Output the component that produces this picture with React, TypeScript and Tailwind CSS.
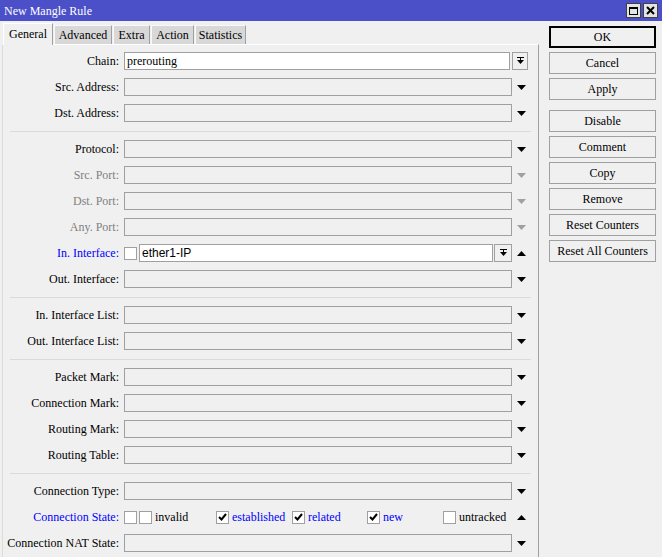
import React from 'react';

type Field = {
  kind: 'field';
  label: string;
  tone?: 'normal' | 'dim' | 'blue';
  value?: string;
  arrow?: 'down' | 'up' | 'none';
  chain?: boolean;
  iface?: boolean;
  state?: boolean;
};
type Sep = { kind: 'sep' };
type Item = Field | Sep;

const rows: Item[] = [
  { kind: 'field', label: 'Chain:', value: 'prerouting', chain: true },
  { kind: 'field', label: 'Src. Address:' },
  { kind: 'field', label: 'Dst. Address:' },
  { kind: 'sep' },
  { kind: 'field', label: 'Protocol:' },
  { kind: 'field', label: 'Src. Port:', tone: 'dim' },
  { kind: 'field', label: 'Dst. Port:', tone: 'dim' },
  { kind: 'field', label: 'Any. Port:', tone: 'dim' },
  { kind: 'field', label: 'In. Interface:', tone: 'blue', iface: true },
  { kind: 'field', label: 'Out. Interface:' },
  { kind: 'sep' },
  { kind: 'field', label: 'In. Interface List:' },
  { kind: 'field', label: 'Out. Interface List:' },
  { kind: 'sep' },
  { kind: 'field', label: 'Packet Mark:' },
  { kind: 'field', label: 'Connection Mark:' },
  { kind: 'field', label: 'Routing Mark:' },
  { kind: 'field', label: 'Routing Table:' },
  { kind: 'sep' },
  { kind: 'field', label: 'Connection Type:' },
  { kind: 'field', label: 'Connection State:', tone: 'blue', state: true },
  { kind: 'field', label: 'Connection NAT State:' },
];

const tabs = ['General', 'Advanced', 'Extra', 'Action', 'Statistics'];
const tabWidths = ['w-[50px]', 'w-[58px]', 'w-[37px]', 'w-[43px]', 'w-[51px]'];

const Tri = ({ up, dim }: { up?: boolean; dim?: boolean }) => (
  <svg width="9" height="5" viewBox="0 0 9 5" className="block">
    <polygon points={up ? '0,5 9,5 4.5,0' : '0,0 9,0 4.5,5'} fill={dim ? '#a0a0a0' : '#000'} />
  </svg>
);

const DropBtn = ({ w }: { w: string }) => (
  <div className={`${w} h-[18px] border border-[#a0a0a0] bg-[#f0f0f0] flex items-center justify-center`}>
    <svg width="7" height="8" viewBox="0 0 7 8">
      <rect x="0" y="0" width="7" height="1" fill="#000" />
      <rect x="3" y="1" width="1" height="2" fill="#000" />
      <polygon points="0,3 7,3 3.5,7" fill="#000" />
    </svg>
  </div>
);

const Check = ({ on }: { on?: boolean }) => (
  <div className="w-[13px] h-[13px] border border-[#a0a0a0] bg-white flex items-center justify-center shrink-0">
    {on && (
      <svg width="9" height="8" viewBox="0 0 9 8">
        <path d="M1 4 L3.5 6.5 L8 1" stroke="#000" strokeWidth="2" fill="none" />
      </svg>
    )}
  </div>
);

const states = [
  { w: 'w-[77px]', t: 'invalid', on: false, blue: false },
  { w: 'w-[76px]', t: 'established', on: true, blue: true },
  { w: 'w-[75px]', t: 'related', on: true, blue: true },
  { w: 'w-[76px]', t: 'new', on: true, blue: true },
  { w: 'w-[69px]', t: 'untracked', on: false, blue: false },
];

const FieldRow = ({ f }: { f: Field }) => {
  const color = f.tone === 'dim' ? 'text-[#808080]' : f.tone === 'blue' ? 'text-[#0000ff]' : 'text-black';
  return (
    <div className="flex items-center h-[26px]">
      <div className={`w-[116px] text-right whitespace-nowrap ${color}`}>{f.label}</div>
      <div className="ml-[5px] flex items-center">
        {f.chain ? (
          <>
            <div className="w-[386px] h-[18px] border border-[#a0a0a0] bg-white pl-[2px] leading-[16px]">{f.value}</div>
            <div className="ml-[2px]">
              <DropBtn w="w-[16px]" />
            </div>
          </>
        ) : f.iface ? (
          <>
            <Check />
            <div className="ml-[2px] w-[354px] h-[18px] border border-[#a0a0a0] bg-white pl-[2px] leading-[16px] font-['Liberation_Sans',sans-serif]">
              ether1-IP
            </div>
            <div className="ml-[1px]">
              <DropBtn w="w-[18px]" />
            </div>
            <div className="ml-[5px]">
              <Tri up />
            </div>
          </>
        ) : f.state ? (
          <>
            <Check />
            <div className="ml-[2px] flex items-center">
              {states.map((s) => (
                <div key={s.t} className={`${s.w} flex items-center`}>
                  <Check on={s.on} />
                  <span className={`ml-[3px] ${s.blue ? 'text-[#0000ff]' : 'text-black'}`}>{s.t}</span>
                </div>
              ))}
            </div>
            <div className="ml-[5px]">
              <Tri up />
            </div>
          </>
        ) : (
          <>
            <div className="w-[388px] h-[18px] border border-[#a0a0a0] bg-[#f0f0f0]" />
            <div className="ml-[5px]">
              <Tri dim={f.tone === 'dim'} />
            </div>
          </>
        )}
      </div>
    </div>
  );
};

const buttons: (string | null)[] = ['OK', 'Cancel', 'Apply', null, 'Disable', 'Comment', 'Copy', 'Remove', 'Reset Counters', 'Reset All Counters'];

export default function App() {
  return (
    <div className="w-[662px] h-[557px] bg-[#f0f0f0] flex flex-col overflow-hidden font-['Liberation_Serif',serif] text-[12px] text-black">
      {/* Title bar */}
      <div className="h-[21px] bg-[#4b4fc8] flex items-center justify-between pl-[4px] pr-[4px]">
        <span className="text-white text-[12px]">New Mangle Rule</span>
        <div className="flex gap-[2px]">
          <div className="w-[15px] h-[15px] bg-[#e4e4e4] border border-[#404040] flex items-center justify-center">
            <div className="w-[9px] h-[8px] border border-black border-t-2" />
          </div>
          <div className="w-[15px] h-[15px] bg-[#e4e4e4] border border-[#404040] flex items-center justify-center">
            <svg width="9" height="9" viewBox="0 0 9 9">
              <path d="M1 1 L8 8 M8 1 L1 8" stroke="#000" strokeWidth="2" />
            </svg>
          </div>
        </div>
      </div>

      <div className="flex flex-1 min-h-0">
        {/* Left: tabs + panel */}
        <div className="w-[539px] flex flex-col">
          <div className="h-[23px] flex items-end pl-[3px]">
            {tabs.map((t, i) =>
              i === 0 ? (
                <div
                  key={t}
                  className={`${tabWidths[i]} h-[22px] -mb-px bg-[#f0f0f0] border-l border-t border-white border-r border-r-[#a0a0a0] flex items-center justify-center pb-[2px] z-10`}
                >
                  {t}
                </div>
              ) : (
                <div
                  key={t}
                  className={`${tabWidths[i]} h-[19px] bg-[#d8d8d8] border-l border-t border-[#f8f8f8] border-r border-r-[#a0a0a0] flex items-center justify-center ml-[1px]`}
                >
                  {t}
                </div>
              )
            )}
          </div>
          <div className="flex-1 ml-[2px] border-l border-[#dcdcdc] border-r border-r-[#a0a0a0] border-t border-t-white pt-[3px]">
            {rows.map((r, i) =>
              r.kind === 'sep' ? (
                <div key={i} className="h-[10px] flex items-center">
                  <div className="ml-[7px] w-[521px] h-px bg-[#dadada]" />
                </div>
              ) : (
                <FieldRow key={i} f={r} />
              )
            )}
          </div>
        </div>

        {/* Right: buttons */}
        <div className="pl-[10px] pt-[5px] flex flex-col gap-[4px]">
          {buttons.map((b, i) =>
            b === null ? (
              <div key={i} className="h-[2px]" />
            ) : (
              <div
                key={b}
                className={`w-[107px] h-[22px] flex items-center justify-center bg-[#f0f0f0] ${
                  b === 'OK' ? 'border-2 border-black' : 'border border-[#a0a0a0]'
                }`}
              >
                {b}
              </div>
            )
          )}
        </div>
      </div>
    </div>
  );
}
